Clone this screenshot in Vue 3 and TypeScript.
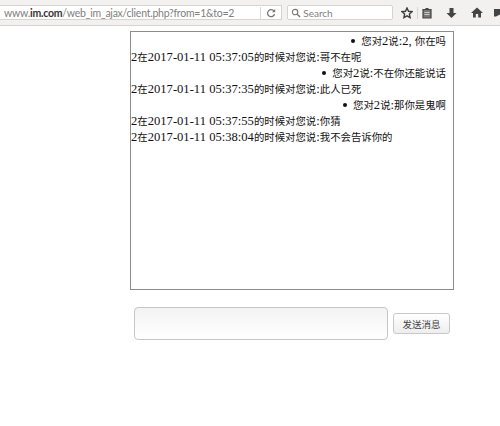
<script setup lang="ts">
interface Msg { runs: { text: string; cjk: boolean }[]; mine: boolean }

const toRuns = (text: string) =>
  text
    .split(/([\u4e00-\u9fff]+)/)
    .filter((s) => s.length > 0)
    .map((s) => ({ text: s, cjk: /[\u4e00-\u9fff]/.test(s) }))

const raw: [string, boolean][] = [
  ['您对2说:2, 你在吗', true],
  ['2在2017-01-11 05:37:05的时候对您说:哥不在呢', false],
  ['您对2说:不在你还能说话', true],
  ['2在2017-01-11 05:37:35的时候对您说:此人已死', false],
  ['您对2说:那你是鬼啊', true],
  ['2在2017-01-11 05:37:55的时候对您说:你猜', false],
  ['2在2017-01-11 05:38:04的时候对您说:我不会告诉你的', false],
]
const messages: Msg[] = raw.map(([text, mine]) => ({ runs: toRuns(text), mine }))
</script>

<template>
  <div class="page">
    <div class="toolbar">
      <div class="urlbar">
        <span class="url">www.<b>im.com</b>/web_im_ajax/client.php?from=1&amp;to=2</span>
        <span class="reload">
          <svg width="10" height="10" viewBox="0 0 10 10"><path d="M8 3.2A3.5 3.5 0 1 0 8.5 6" fill="none" stroke="#777" stroke-width="1.3"/><path d="M9.2 1v3.2H6z" fill="#777"/></svg>
        </span>
      </div>
      <div class="search">
        <svg width="10" height="10" viewBox="0 0 11 11"><circle cx="4.500" cy="4.500" r="3" fill="none" stroke="#777" stroke-width="1.200"/><path d="M6.800 6.800 10 10" stroke="#777" stroke-width="1.500"/></svg>
        <span>Search</span>
      </div>
      <div class="tools">
        <svg class="star" width="12" height="12" viewBox="0 0 12 12"><path d="M6 1l1.500 3.300 3.500.4-2.600 2.400.7 3.500L6 8.900l-3.100 1.700.7-3.500L1 4.700l3.500-.4z" fill="none" stroke="#3c3c3c" stroke-width="1.400"/></svg>
        <i class="divider"></i>
        <svg class="clip" width="10" height="12" viewBox="0 0 10 12"><path d="M1 2.500h8V11H1z" fill="#777" stroke="#444" stroke-width="1.200"/><path d="M3.500 1h3v2h-3z" fill="#444"/><path d="M2.500 5.500h5M2.500 7.500h5" stroke="#ddd" stroke-width=".8"/></svg>
        <svg class="down" width="11" height="12" viewBox="0 0 11 12"><path d="M3.500 1h4v5H10.500L5.500 11 .5 6h3z" fill="#444"/></svg>
        <svg class="home" width="12" height="11" viewBox="0 0 12 11"><path d="M6 .5 12 6h-2v4.500H7.200V7H4.800v3.500H2V6H0z" fill="#444"/></svg>
        <svg class="pocket" width="6" height="10" viewBox="0 0 6 10"><path d="M0 1h6v5.500L2 8.500H0z" fill="#444"/></svg>
      </div>
    </div>

    <main class="content">
      <section class="chat">
        <div v-for="(m, i) in messages" :key="i" class="line" :class="{ mine: m.mine }">
          <span class="body">
            <template v-for="(r, j) in m.runs" :key="j">
              <span v-if="r.cjk" class="cjk">{{ r.text }}</span>
              <template v-else>{{ r.text }}</template>
            </template>
          </span>
        </div>
      </section>
      <form class="composer" @submit.prevent>
        <textarea class="input"></textarea>
        <button class="send" type="button">发送消息</button>
      </form>
    </main>
  </div>
</template>

<style>
html, body { margin: 0; background: #fff; }
</style>

<style scoped>
.page {
  width: 500px;
  height: 426px;
  overflow: hidden;
  background: #fff;
}
.toolbar {
  height: 26px;
  box-sizing: border-box;
  padding-top: 5px;
  display: flex;
  align-items: flex-start;
  background: #f2f1f0;
  border-bottom: 1px solid #d6d4d1;
  font-family: Lato, "DejaVu Sans", sans-serif;
  font-size: 10px;
  color: #808080;
}
.urlbar {
  width: 283px;
  height: 15px;
  box-sizing: border-box;
  display: flex;
  align-items: center;
  justify-content: space-between;
  background: #fff;
  border: 1px solid #d6d4d1;
  border-left: 0;
  padding-left: 4px;
}
.url {
  white-space: nowrap;
  font-size: 10.500px;
  letter-spacing: -0.25px;
}
.url b { color: #333; font-weight: 700; }
.reload {
  width: 21px;
  height: 12px;
  box-sizing: border-box;
  display: flex;
  align-items: center;
  justify-content: center;
  border-left: 1px solid #d8d8d8;
}
.search {
  width: 106px;
  height: 15px;
  margin-left: 5px;
  box-sizing: border-box;
  display: flex;
  align-items: center;
  gap: 2px;
  padding-left: 3px;
  background: #fff;
  border: 1px solid #d6d4d1;
  border-radius: 2px;
}
.tools {
  display: flex;
  align-items: center;
  height: 15px;
  margin-left: 8px;
}
.divider {
  width: 1px;
  height: 12px;
  margin: 0 4px;
  background: #d8d6d3;
}
.down { margin-left: 14px; }
.home { margin-left: 14px; }
.pocket { margin-left: 11px; }

.content {
  margin-left: 130px;
  width: 324px;
}
.chat {
  height: 259px;
  margin-top: 5px;
  padding-top: 1px;
  box-sizing: border-box;
  border: 1px solid #8c8c8c;
  overflow: hidden;
  font-family: "Liberation Serif", "Noto Sans CJK SC", serif;
  font-size: 12.6px;
  line-height: 16px;
  color: #111;
}
.line {
  height: 16px;
  white-space: pre;
}
.cjk {
  font-size: 10.400px;
}
.mine {
  display: flex;
  justify-content: flex-end;
  align-items: center;
  padding-right: 7px;
}
.mine::before {
  content: "";
  width: 4px;
  height: 4px;
  margin-right: 6px;
  border-radius: 50%;
  background: #111;
}
.composer {
  display: flex;
  align-items: center;
  margin: 17px 0 0 4px;
}
.input {
  width: 254px;
  height: 33px;
  box-sizing: border-box;
  margin: 0;
  padding: 4px;
  resize: none;
  border: 1px solid #c6c6c6;
  border-radius: 4px;
  background: linear-gradient(#f3f3f3, #fff);
  outline: none;
}
.send {
  width: 57px;
  height: 21px;
  margin: 0 0 0 5px;
  padding: 0;
  box-sizing: border-box;
  border: 1px solid #c8c8c8;
  border-radius: 3px;
  background: linear-gradient(#fff, #eee);
  font-family: "Noto Sans CJK SC", sans-serif;
  font-size: 9.500px;
  color: #444;
}
</style>
